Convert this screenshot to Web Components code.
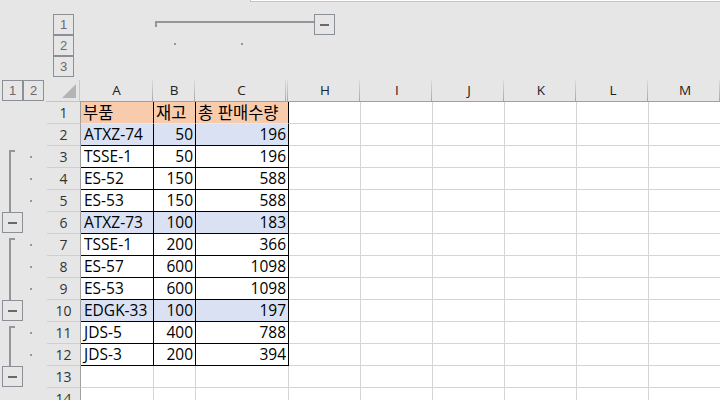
<!DOCTYPE html>
<html lang="ko">
<head>
<meta charset="utf-8">
<style>
  html, body { margin: 0; padding: 0; background: #e6e6e6; }
  body { width: 720px; height: 400px; overflow: hidden; font-family: "Noto Sans CJK KR", "Open Sans", sans-serif; }
</style>
</head>
<body>
<work-sheet></work-sheet>
<script>
const COLS = [['A', 73], ['B', 42], ['C', 93], ['H', 72], ['I', 72], ['J', 72], ['K', 72], ['L', 72], ['M', 72]];

const ROWS = [
  { cells: ['부품', '재고', '총 판매수량'], kind: 'head' },
  { cells: ['ATXZ-74', '50', '196'], kind: 'sum' },
  { cells: ['TSSE-1', '50', '196'], outline: 'start' },
  { cells: ['ES-52', '150', '588'], outline: 'line' },
  { cells: ['ES-53', '150', '588'], outline: 'line' },
  { cells: ['ATXZ-73', '100', '183'], kind: 'sum', outline: 'btn' },
  { cells: ['TSSE-1', '200', '366'], outline: 'start' },
  { cells: ['ES-57', '600', '1098'], outline: 'line' },
  { cells: ['ES-53', '600', '1098'], outline: 'line' },
  { cells: ['EDGK-33', '100', '197'], kind: 'sum', outline: 'btn' },
  { cells: ['JDS-5', '400', '788'], outline: 'start' },
  { cells: ['JDS-3', '200', '394'], outline: 'line' },
  { cells: ['', '', ''], kind: 'empty', outline: 'btn' },
  { cells: ['', '', ''], kind: 'empty' }
];

class OutlineBtn extends HTMLElement {
  constructor() {
    super();
    this.attachShadow({ mode: 'open' });
    this.shadowRoot.innerHTML = `
      <style>
        :host {
          display: flex;
          align-items: center;
          justify-content: center;
          box-sizing: border-box;
          width: 21px;
          height: 21px;
          border: 1px solid #8b9097;
          background: #e6e6e6;
          color: #6a6a6a;
          font: 13px/1 "Liberation Sans", sans-serif;
        }
        i { display: block; width: 9px; height: 2px; background: #6a6a6a; }
      </style>
      <slot><i></i></slot>
    `;
  }
}
customElements.define('outline-btn', OutlineBtn);

class TopOutline extends HTMLElement {
  constructor() {
    super();
    this.attachShadow({ mode: 'open' });
    this.shadowRoot.innerHTML = `
      <style>
        :host { display: block; position: relative; height: 80px; box-sizing: border-box; padding: 14px 0 0 53px; }
        .layout { display: flex; align-items: flex-start; }
        .levels { display: flex; flex-direction: column; width: 21px; }
        .group { margin-left: 81px; width: 180px; display: flex; flex-direction: column; }
        .bar { display: flex; align-items: flex-start; height: 21px; }
        .bracket {
          width: 159px;
          height: 6px;
          margin-top: 7px;
          box-sizing: border-box;
          border-top: 2px solid #969696;
          border-left: 2px solid #969696;
        }
        .dots { display: flex; padding: 8px 0 0 19px; gap: 65px; }
        .dots b { display: block; width: 2px; height: 2px; background: #969696; }
        .pane {
          position: absolute;
          top: 0;
          left: 250px;
          right: 0;
          height: 2px;
          box-sizing: border-box;
          background: #fff;
          border-left: 1px solid #c4c4c4;
          border-bottom: 1px solid #c4c4c4;
        }
      </style>
      <div class="pane"></div>
      <div class="layout">
        <div class="levels">
          <outline-btn>1</outline-btn>
          <outline-btn>2</outline-btn>
          <outline-btn>3</outline-btn>
        </div>
        <div class="group">
          <div class="bar"><div class="bracket"></div><outline-btn></outline-btn></div>
          <div class="dots"><b></b><b></b></div>
        </div>
      </div>
    `;
  }
}
customElements.define('top-outline', TopOutline);

class ColHeads extends HTMLElement {
  constructor() {
    super();
    this.attachShadow({ mode: 'open' });
    const heads = COLS.map(([name, w], i) =>
      `<div class="col ${name === 'C' ? 'hid' : ''} ${i > 2 ? 'far' : ''}" style="width:${w}px">${name}</div>`).join('');
    this.shadowRoot.innerHTML = `
      <style>
        :host { display: flex; height: 22px; }
        .levels { display: flex; width: 47px; box-sizing: border-box; padding-left: 2px; }
        .corner {
          width: 34px;
          box-sizing: border-box;
          border-bottom: 1px solid #c4c4c4;
          border-right: 1px solid #c8c8c8;
          display: flex;
          align-items: flex-end;
          justify-content: flex-end;
          padding: 0 3px 3px 0;
        }
        .corner svg { display: block; }
        .col {
          box-sizing: border-box;
          flex: none;
          position: relative;
          text-align: center;
          font: 13.5px/21px "Open Sans", sans-serif;
          color: #222;
          border-bottom: 1px solid #a0a0a0;
          background: linear-gradient(to bottom, #dcdcdc, #a8a8a8) right top / 1px 21px no-repeat;
        }
        .far { padding-left: 2px; }
        .hid::before {
          content: "";
          position: absolute;
          right: 2px;
          top: 0;
          width: 1px;
          height: 21px;
          background: linear-gradient(to bottom, #dcdcdc, #a8a8a8);
        }
      </style>
      <div class="levels"><outline-btn>1</outline-btn><outline-btn>2</outline-btn></div>
      <div class="corner"><svg width="14" height="14" viewBox="0 0 14 14"><path d="M14 0V14H0Z" fill="#b4b4b4"/></svg></div>
      ${heads}
    `;
  }
}
customElements.define('col-heads', ColHeads);

class OutlineCell extends HTMLElement {
  constructor() {
    super();
    this.attachShadow({ mode: 'open' });
  }
  connectedCallback() {
    const mark = this.getAttribute('mark') || '';
    const body = {
      start: '<div class="tree start"></div><b></b>',
      line: '<div class="tree"></div><b></b>',
      btn: '<div class="slot"><outline-btn></outline-btn></div>',
      '': ''
    }[mark];
    this.shadowRoot.innerHTML = `
      <style>
        :host { display: block; position: relative; width: 47px; height: 22px; flex: none; }
        .tree { position: absolute; left: 9px; top: 0; bottom: 0; width: 2px; background: #969696; }
        .tree.start { top: 4px; width: 6px; height: 18px; background: none; border-left: 2px solid #969696; border-top: 2px solid #969696; box-sizing: border-box; }
        b { position: absolute; left: 30px; top: 10px; width: 2px; height: 2px; background: #969696; }
        .slot { padding: 0 0 0 2px; }
      </style>
      ${body}
    `;
  }
}
customElements.define('outline-cell', OutlineCell);

class SheetRow extends HTMLElement {
  constructor() {
    super();
    this.attachShadow({ mode: 'open' });
  }
  set data({ num, row }) {
    const kind = row.kind || 'body';
    const data = row.cells.map((text, i) => {
      const right = kind !== 'head' && i > 0;
      return `<div class="cell c${i} ${right ? 'num' : ''}" style="width:${COLS[i][1]}px">${text}</div>`;
    }).join('');
    const blanks = COLS.slice(3).map(([, w]) => `<div class="blank" style="width:${w}px"></div>`).join('');
    this.shadowRoot.innerHTML = `
      <style>
        :host { display: flex; height: 22px; }
        .rownum {
          box-sizing: border-box;
          width: 34px;
          flex: none;
          text-align: center;
          font: 14px/21px "Open Sans", sans-serif;
          color: #333;
          border-bottom: 1px solid #cfcfcf;
          border-right: 1px solid #a0a0a0;
        }
        .cell, .blank {
          box-sizing: border-box;
          flex: none;
          height: 22px;
          background: #fff;
          border-right: 1px solid #d4d4d4;
          border-bottom: 1px solid #d4d4d4;
        }
        .cell {
          padding: 0 2px 0 3px;
          color: #000;
          font: 15.5px/21px "Open Sans", "Noto Sans CJK KR", sans-serif;
          white-space: nowrap;
        }
        .num { text-align: right; }
        :host([kind="body"]) .cell, :host([kind="sum"]) .cell { border-color: #000; }
        :host([kind="sum"]) .cell { background: #d9e1f2; }
        :host([kind="head"]) .cell {
          background: #f8cbad;
          border-bottom-color: #e8e8e8;
          border-right-color: #000;
          padding-left: 2px;
          font-family: "Noto Sans CJK KR", sans-serif;
          font-size: 16.5px;
          line-height: 20px;
        }
      </style>
      <outline-cell mark="${row.outline || ''}"></outline-cell>
      <div class="rownum">${num}</div>
      ${data}
      ${blanks}
    `;
  }
}
customElements.define('sheet-row', SheetRow);

class WorkSheet extends HTMLElement {
  constructor() {
    super();
    this.attachShadow({ mode: 'open' });
    this.shadowRoot.innerHTML = `
      <style>
        :host { display: block; width: 720px; height: 400px; overflow: hidden; background: #e6e6e6; }
      </style>
      <top-outline></top-outline>
      <col-heads></col-heads>
      <div id="rows"></div>
    `;
    const box = this.shadowRoot.getElementById('rows');
    ROWS.forEach((row, i) => {
      const el = document.createElement('sheet-row');
      el.setAttribute('kind', row.kind || 'body');
      el.data = { num: i + 1, row };
      box.appendChild(el);
    });
  }
}
customElements.define('work-sheet', WorkSheet);
</script>
</body>
</html>
